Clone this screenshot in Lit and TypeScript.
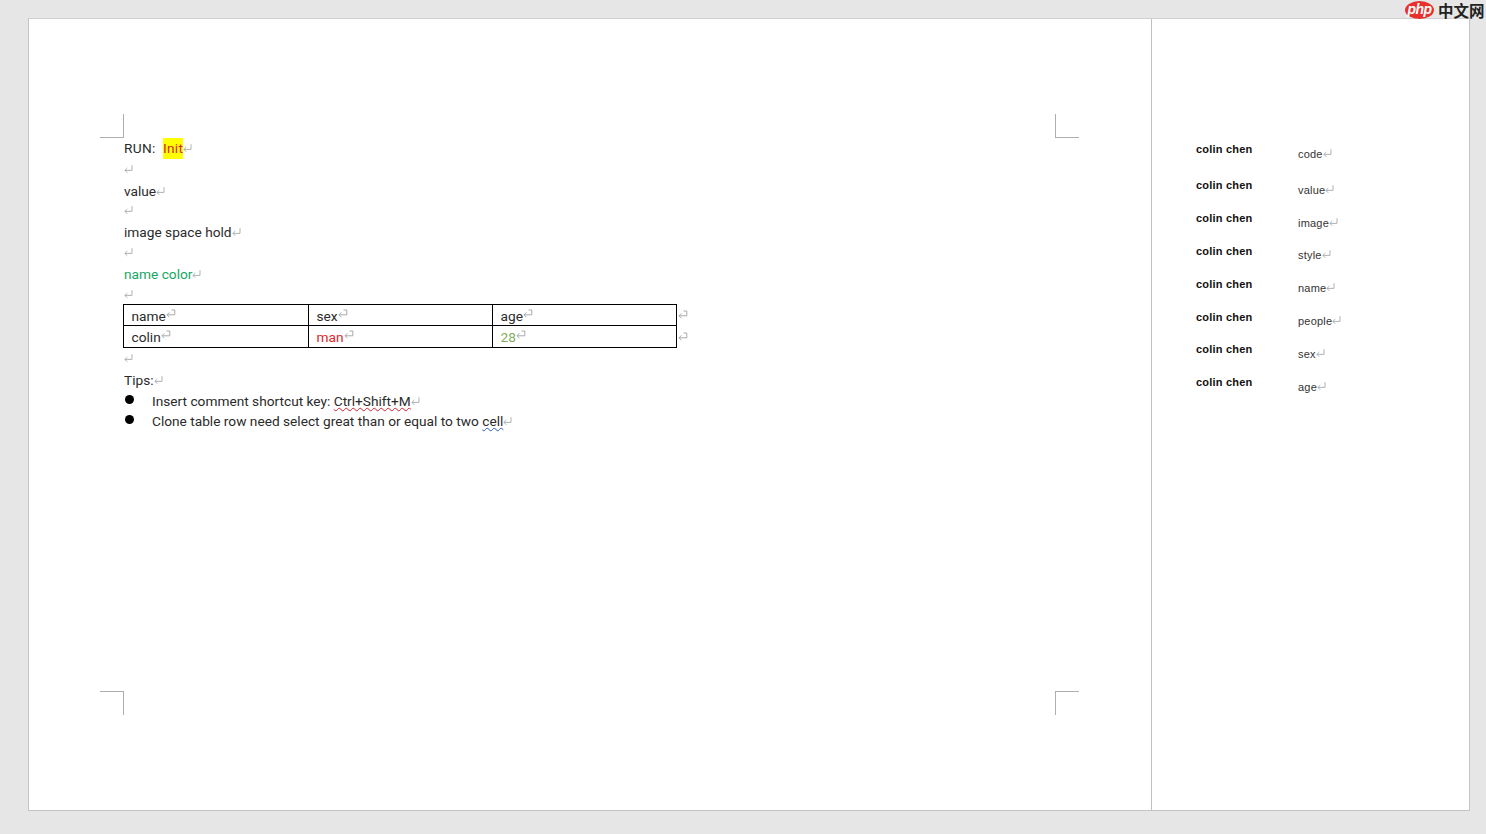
import { LitElement, html, css } from "lit";
import { customElement } from "lit/decorators.js";

const mark = html`<svg class="mark" viewBox="0 0 9 10" width="9" height="10"><path d="M8 1.2V6.4H0.9M3.3 4L0.9 6.4l2.4 2.4" fill="none" stroke="#a8a8a8" stroke-width="0.9"/></svg>`;
const cellMark = html`<svg class="mark cm" viewBox="0 0 10 10" width="10" height="10"><path d="M5.5 1H8.8V5.8H1M3.4 3.4L1 5.8l2.4 2.4" fill="none" stroke="#a0a0a0" stroke-width="0.9"/></svg>`;

const comments = [
  ["code", "c1", ""], ["value", "c2", ""], ["image", "c2", ""], ["style", "c2", "up"],
  ["name", "c2", "up"], ["people", "c3", "up"], ["sex", "c2", ""], ["age", "c2", ""],
];

@customElement("app-root")
export class AppRoot extends LitElement {
  static styles = css`
    :host { display: block; height: 834px; background: #e6e6e6; overflow: hidden; position: relative;
      font-family: Roboto, "Noto Sans CJK SC", sans-serif; color: #2a2a2a; }
    .page { display: flex; box-sizing: border-box; width: 1442px; height: 793px; margin: 18px 0 0 28px;
      background: #fff; border: 1px solid #c4c4c4; border-top-color: #cfcfcf; }
    .doc { position: relative; box-sizing: border-box; width: 1122px; padding: 119px 0 0 95px; font-size: 13.7px; }
    .side { flex: 1; border-left: 1px solid #c0c0c0; padding: 120px 0 0 44px; display: grid;
      grid-template-columns: 102px 1fr; align-content: start; font-family: "Liberation Sans", sans-serif; }
    .line { height: 20.8px; line-height: 22.5px; white-space: nowrap; }
    .line.empty { line-height: 20.5px; }
    .first { letter-spacing: 0.3px; line-height: 21.5px; }
    .mark { display: inline-block; vertical-align: 0; }
    .cm { vertical-align: 2px; }
    .hl { background: #ffff00; color: #e0241c; display: inline-block; height: 21px; }
    .green { color: #16a765; }
    .red { color: #e0242c; }
    .olive { color: #7fae5a; }
    .tablewrap { display: flex; margin-left: -1px; }
    table { border-collapse: collapse; width: 553px; table-layout: fixed; }
    td { border: 1px solid #000; height: 21px; padding: 3px 0 0 7.5px; line-height: 17px; box-sizing: border-box; width: 184px; }
    td:first-child { width: 185px; }
    tr + tr td { height: 22px; padding-top: 2px; }
    .ends { display: flex; flex-direction: column; padding: 6px 0 0 1px; gap: 12px; }
    .bullet { display: flex; align-items: center; height: 20.3px; white-space: nowrap; }
    .bullet > span:last-child { padding-top: 2px; }
    .dot { width: 9px; height: 9px; border-radius: 50%; background: #000; margin: 0 18px 2px 1px; flex: none; }
    .wavy-r { text-decoration: underline wavy #d8202c 1px; text-underline-offset: 1px; }
    .wavy-b { text-decoration: underline wavy #2a56c6 1px; text-underline-offset: 1px; }
    .corner { position: absolute; box-sizing: content-box; width: 23px; height: 23px; border: 0 solid #aeaeae; }
    .tl { left: 71px; top: 95px; border-right-width: 1px; border-bottom-width: 1px; }
    .tr { left: 1026px; top: 95px; border-left-width: 1px; border-bottom-width: 1px; }
    .bl { left: 71px; top: 672px; border-right-width: 1px; border-top-width: 1px; }
    .br { left: 1026px; top: 672px; border-left-width: 1px; border-top-width: 1px; }
    .author, .value { box-sizing: border-box; }
    .author { font-size: 11px; font-weight: 700; color: #111; letter-spacing: 0.2px; line-height: 20px; }
    .value { font-size: 11px; color: #333; padding-top: 5px; line-height: 20px; letter-spacing: 0.2px; }
    .value.up { padding-top: 4px; }
    .c1 { height: 36px; } .c2 { height: 33px; } .c3 { height: 32px; }
    .logo { position: absolute; left: 1405px; top: 0; display: flex; align-items: center; gap: 4px; height: 20px; width: 81px; }
    .pill { width: 29px; height: 18px; border-radius: 50%; background: #e8302c; color: #fff; font: italic 700 14px/16px "Liberation Sans", sans-serif;
      text-align: center; flex: none; letter-spacing: -0.5px; }
    .cn { font: 700 15.5px/20px "Noto Sans CJK SC", sans-serif; color: #222; white-space: nowrap; }
  `;

  render() {
    return html`
      <div class="page">
        <div class="doc">
          <i class="corner tl"></i><i class="corner tr"></i><i class="corner bl"></i><i class="corner br"></i>
          <div class="line first">RUN:&nbsp; <span class="hl">Init</span>${mark}</div>
          <div class="line empty">${mark}</div>
          <div class="line">value${mark}</div>
          <div class="line empty">${mark}</div>
          <div class="line">image space hold${mark}</div>
          <div class="line empty">${mark}</div>
          <div class="line green">name color${mark}</div>
          <div class="line empty">${mark}</div>
          <div class="tablewrap">
            <table>
              <tr><td>name${cellMark}</td><td>sex${cellMark}</td><td>age${cellMark}</td></tr>
              <tr><td>colin${cellMark}</td><td><span class="red">man</span>${cellMark}</td><td><span class="olive">28</span>${cellMark}</td></tr>
            </table>
            <div class="ends">${cellMark}${cellMark}</div>
          </div>
          <div class="line empty">${mark}</div>
          <div class="line">Tips:${mark}</div>
          <div class="bullet"><span class="dot"></span><span>Insert comment shortcut key: <span class="wavy-r">Ctrl+Shift+M</span>${mark}</span></div>
          <div class="bullet"><span class="dot"></span><span>Clone table row need select great than or equal to two <span class="wavy-b">cell</span>${mark}</span></div>
        </div>
        <div class="side">
          ${comments.map(([v, c, u]) => html`<div class="author ${c}">colin chen</div><div class="value ${c} ${u}">${v}${mark}</div>`)}
        </div>
      </div>
      <div class="logo"><span class="pill">php</span><span class="cn">中文网</span></div>
    `;
  }
}
